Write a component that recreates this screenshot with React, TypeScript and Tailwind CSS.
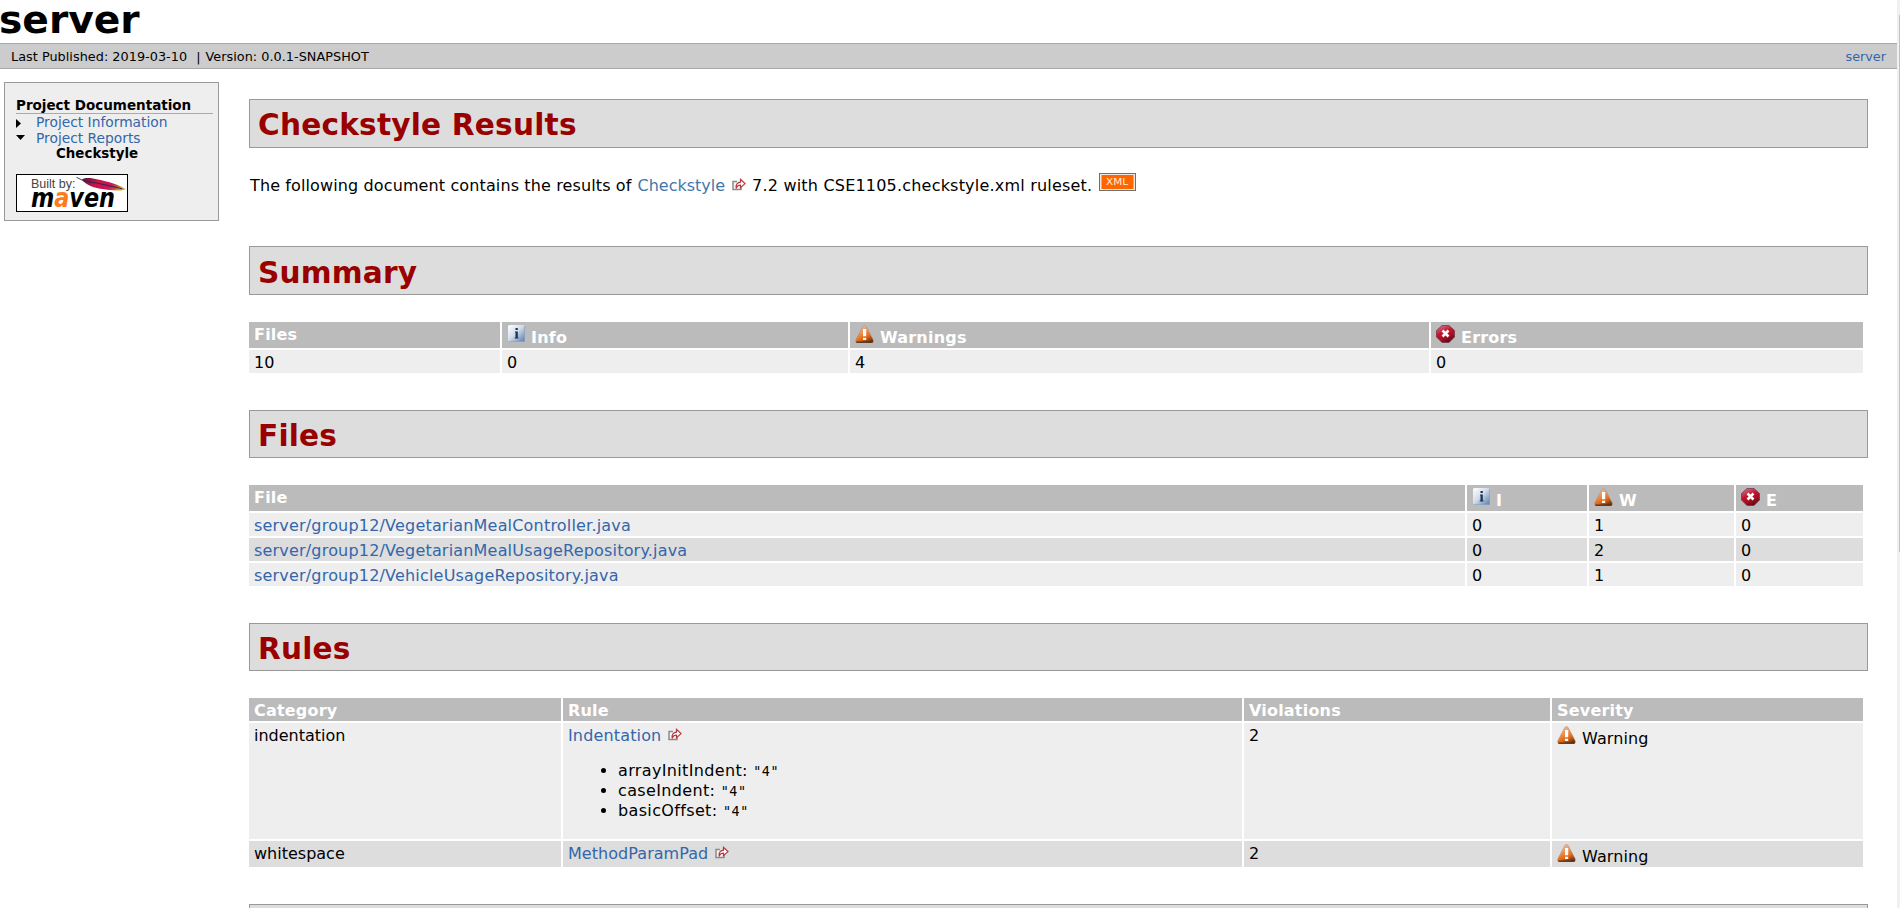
import type { ReactNode } from "react";

const InfoIcon = () => (
  <svg width="18" height="18" viewBox="0 0 18 18" className="mt-[3px] shrink-0">
    <defs>
      <linearGradient id="info" x1="0" y1="0" x2="1" y2="1">
        <stop offset="0" stopColor="#ffffff" />
        <stop offset="0.45" stopColor="#d3deea" />
        <stop offset="1" stopColor="#5577a8" />
      </linearGradient>
    </defs>
    <rect x="1" y="0" width="17" height="17" rx="1.5" fill="url(#info)" />
    <path d="M1.500 16.500H17.500V1" fill="none" stroke="#8fa4c2" strokeWidth="0.700" />
    <path d="M8.500 3h2.300v2H8.500zM8 6.500h2.800v6h0.700V13.500H7.800v-1h0.700V7.500H8z" fill="#1c3158" />
  </svg>
);

const WarningIcon = () => (
  <svg width="19" height="18" viewBox="0 0 19 18" className="mt-[3px] shrink-0">
    <defs>
      <linearGradient id="warn" x1="0.2" y1="0" x2="0.7" y2="1">
        <stop offset="0" stopColor="#e8c4b4" />
        <stop offset="0.45" stopColor="#f08a44" />
        <stop offset="0.72" stopColor="#e0660f" />
        <stop offset="1" stopColor="#6e3410" />
      </linearGradient>
    </defs>
    <path d="M9.500 0.500C10.600 0.500 11.200 1.500 11.800 2.600L18 14.500C18.800 16.300 18.300 17.500 16.500 17.500H2.500C0.700 17.500 0.200 16.300 1 14.500L7.200 2.600C7.800 1.500 8.400 0.500 9.500 0.500Z" fill="url(#warn)" stroke="#a88a7a" strokeWidth="0.500" />
    <path d="M1.300 17.200H17.700" stroke="#4a2a1c" strokeWidth="1.200" />
    <path d="M8 4h3.200v7.300H8zM8 12.800h3.200v2.200H8z" fill="#fff" />
  </svg>
);

const ErrorIcon = () => (
  <svg width="19" height="18" viewBox="0 0 19 18" className="mt-[3px] shrink-0">
    <defs>
      <linearGradient id="err" x1="0.2" y1="0" x2="0.7" y2="1">
        <stop offset="0" stopColor="#d0708a" />
        <stop offset="0.4" stopColor="#c4142c" />
        <stop offset="0.7" stopColor="#a50d20" />
        <stop offset="1" stopColor="#4d0a14" />
      </linearGradient>
    </defs>
    <path d="M6 0.500H13L18.500 5.500V12L13 17.500H6L0.500 12V5.500Z" fill="url(#err)" stroke="#6b3048" strokeWidth="0.700" />
    <path d="M6.500 5.500L12.500 11.500M12.500 5.500L6.500 11.500" stroke="#fff" strokeWidth="2.600" />
  </svg>
);

const ExternalIcon = () => (
  <svg width="14" height="13" viewBox="0 0 14 13" className="mb-[4px] ml-[7px] shrink-0">
    <path d="M5 3.500H1V11.500H9V9" fill="#f4f4f4" stroke="#8c8c8c" strokeWidth="1.500" />
    <path d="M4.300 9.800C3.600 6.500 5.500 4.300 8.500 4.200V1.400L13 5.600L8.500 9.700V7.200C6.600 7 5.200 8 4.300 9.800Z" fill="#fff" stroke="#b3383c" strokeWidth="1.200" />
  </svg>
);

const XmlBadge = () => (
  <svg width="37" height="18" viewBox="0 0 37 18" className="mb-[4px] ml-[7px] shrink-0">
    <rect x="0.500" y="0.500" width="36" height="17" fill="#f3e6da" stroke="#6f6f6f" />
    <rect x="2.500" y="2" width="32" height="14" fill="#ff6600" />
    <text x="7" y="12" textLength="22" lengthAdjust="spacingAndGlyphs" fontFamily="DejaVu Sans, sans-serif" fontSize="8" fill="#ffe9d8">XML</text>
  </svg>
);

const MavenLogo = () => (
  <svg width="112" height="38" viewBox="0 0 112 38" className="mt-3 block">
    <defs>
      <linearGradient id="feather" x1="0" y1="0" x2="1" y2="0.25">
        <stop offset="0" stopColor="#2b1a55" />
        <stop offset="0.2" stopColor="#8c1638" />
        <stop offset="0.4" stopColor="#c81440" />
        <stop offset="0.75" stopColor="#c41a55" />
        <stop offset="0.9" stopColor="#c8502e" />
        <stop offset="1" stopColor="#c9a53a" />
      </linearGradient>
    </defs>
    <rect x="0.500" y="0.500" width="111" height="37" fill="#fff" stroke="#000" />
    <text x="15" y="13.500" textLength="44.500" lengthAdjust="spacingAndGlyphs" fontFamily="Liberation Sans, sans-serif" fontSize="12.500" fill="#444">Built by:</text>
    <text x="15" y="33" textLength="84" lengthAdjust="spacingAndGlyphs" fontFamily="DejaVu Sans, sans-serif" fontWeight="bold" fontStyle="italic" fontSize="26" fill="#000">
      m<tspan fill="#ff7a1a">a</tspan>ven
    </text>
    <path d="M60.500 3.300L70 8" stroke="#333" strokeWidth="0.900" />
    <path d="M66 5.500C70 3 76 4 82 5.500C92 7.500 101 10.500 106 13L110 15.300L105 16.500C95 16.500 84 15 77 13C72 11 68 9 66 5.500Z" fill="url(#feather)" />
    <path d="M68 7C80 8.500 92 11.500 106 14.800" fill="none" stroke="#3a1c66" strokeWidth="1.100" />
  </svg>
);

const Heading = ({ children, className = "" }: { children?: ReactNode; className?: string }) => (
  <h2 className={`w-[1619px] border border-[#999] bg-[#ddd] pl-[8px] text-[29.6px] leading-[35px] font-bold tracking-[0.2px] text-[#900] ${className}`}>{children}</h2>
);

const Th = ({ icon, children }: { icon?: ReactNode; children: ReactNode }) => (
  <div className="flex bg-[#bbb] pl-[5px] font-bold tracking-[0.2px] text-white">
    {icon}
    <span className={icon ? "ml-[6px] pt-[6px]" : "pt-[3px]"}>{children}</span>
  </div>
);

const Td = ({ dark, children }: { dark?: boolean; children: ReactNode }) => (
  <div className={`pt-[3px] pl-[5px] ${dark ? "bg-[#ddd]" : "bg-[#eee]"}`}>{children}</div>
);

const Severity = ({ dark }: { dark?: boolean }) => (
  <div className={`flex pl-[5px] ${dark ? "bg-[#ddd]" : "bg-[#eee]"}`}>
    <WarningIcon />
    <span className="ml-[6px] pt-[6px] tracking-[0.1px]">Warning</span>
  </div>
);

const Link = ({ children }: { children: ReactNode }) => <a className="text-[#36a]">{children}</a>;

const files: [string, number, number, number][] = [
  ["server/group12/VegetarianMealController.java", 0, 1, 0],
  ["server/group12/VegetarianMealUsageRepository.java", 0, 2, 0],
  ["server/group12/VehicleUsageRepository.java", 0, 1, 0],
];

const options = ["arrayInitIndent", "caseIndent", "basicOffset"];

export default function App() {
  return (
    <div className="flex h-[908px] w-[1900px] overflow-hidden bg-white font-['DejaVu_Sans',sans-serif] text-[16px] leading-[19px] text-black">
      <div className="w-[1897px] shrink-0">
        <h1 className="-ml-px h-[43px] text-[39.2px] leading-[40px] font-bold">server</h1>
        <div className="flex h-[26px] justify-between border-y border-[#aaa] bg-[#ccc] pr-[11px] pl-[11px] text-[12.8px] leading-[25px]">
          <div className="flex tracking-[0.04px]">
            <span>Last Published: 2019-03-10</span>
            <span className="ml-[9px]">|</span>
            <span className="ml-[5px]">Version: 0.0.1-SNAPSHOT</span>
          </div>
          <Link>server</Link>
        </div>

        <div className="flex items-start">
          <nav className="mt-[13px] ml-1 h-[139px] w-[215px] border border-[#999] bg-[#eee] pt-[14px] pr-[5px] pl-[11px] text-[13.8px] leading-4">
            <h5 className="h-[17px] border-b border-[#aaa] text-[13.5px] leading-[17px] font-bold">Project Documentation</h5>
            <div className="flex">
              <svg width="20" height="16" viewBox="0 0 20 16"><path d="M0 5L5 9.500L0 14Z" /></svg>
              <Link>Project Information</Link>
            </div>
            <div className="flex">
              <svg width="20" height="16" viewBox="0 0 20 16"><path d="M0 5H9L4.500 10Z" /></svg>
              <Link>Project Reports</Link>
            </div>
            <div className="pl-[40px] text-[13.4px] font-bold">Checkstyle</div>
            <MavenLogo />
          </nav>

          <main className="ml-[30px] w-[1619px] pt-[30px]">
            <Heading className="h-[49px] pt-2">Checkstyle Results</Heading>
            <p className="mt-[28px] flex h-[19px] items-end">
              <span className="pl-px tracking-[0.12px]">The following document contains the results of</span>
              <a className="ml-[6px] text-[#47a]">Checkstyle</a>
              <ExternalIcon />
              <span className="ml-[6px] tracking-[0.2px]">7.2 with CSE1105.checkstyle.xml ruleset.</span>
              <XmlBadge />
            </p>

            <Heading className="mt-[51px] h-[49px] pt-[9px]">Summary</Heading>
            <div className="mt-[27px] grid w-[1614px] grid-cols-[251px_346px_579px_432px] grid-rows-[26px_23px] gap-[2px]">
              <Th>Files</Th>
              <Th icon={<InfoIcon />}>Info</Th>
              <Th icon={<WarningIcon />}>Warnings</Th>
              <Th icon={<ErrorIcon />}>Errors</Th>
              <Td>10</Td>
              <Td>0</Td>
              <Td>4</Td>
              <Td>0</Td>
            </div>

            <Heading className="mt-[37px] h-[48px] pt-2">Files</Heading>
            <div className="mt-[27px] grid w-[1614px] grid-cols-[1216px_120px_145px_127px] grid-rows-[26px_23px_23px_23px] gap-[2px]">
              <Th>File</Th>
              <Th icon={<InfoIcon />}>I</Th>
              <Th icon={<WarningIcon />}>W</Th>
              <Th icon={<ErrorIcon />}>E</Th>
              {files.map(([name, i, w, e], row) => [
                <Td key={name} dark={row === 1}><span className="tracking-[0.19px]"><Link>{name}</Link></span></Td>,
                <Td key={name + "i"} dark={row === 1}>{i}</Td>,
                <Td key={name + "w"} dark={row === 1}>{w}</Td>,
                <Td key={name + "e"} dark={row === 1}>{e}</Td>,
              ])}
            </div>

            <Heading className="mt-[37px] h-[48px] pt-2">Rules</Heading>
            <div className="mt-[27px] grid w-[1614px] grid-cols-[312px_679px_306px_311px] grid-rows-[23px_116px_26px] gap-[2px]">
              <Th>Category</Th>
              <Th>Rule</Th>
              <Th>Violations</Th>
              <Th>Severity</Th>
              <Td>indentation</Td>
              <Td>
                <div className="flex items-end tracking-[0.15px]"><Link>Indentation</Link><ExternalIcon /></div>
                <ul className="mt-4 list-disc pl-[50px] leading-5 tracking-[0.35px]">
                  {options.map((o) => (
                    <li key={o}>{o}: <code className="font-['DejaVu_Sans_Mono',monospace] text-[13.33px] leading-none tracking-[0.6px]">"4"</code></li>
                  ))}
                </ul>
              </Td>
              <Td>2</Td>
              <Severity />
              <Td dark>whitespace</Td>
              <Td dark>
                <div className="flex items-end tracking-[0.05px]"><Link>MethodParamPad</Link><ExternalIcon /></div>
              </Td>
              <Td dark>2</Td>
              <Severity dark />
            </div>

            <Heading className="mt-[37px] h-[49px]" />
          </main>
        </div>
      </div>
      <div className="flex w-[3px] shrink-0 justify-end bg-[#f0f0f0] pt-[15px]">
        <div className="h-[537px] w-px bg-[#c1c1c1]" />
      </div>
    </div>
  );
}
